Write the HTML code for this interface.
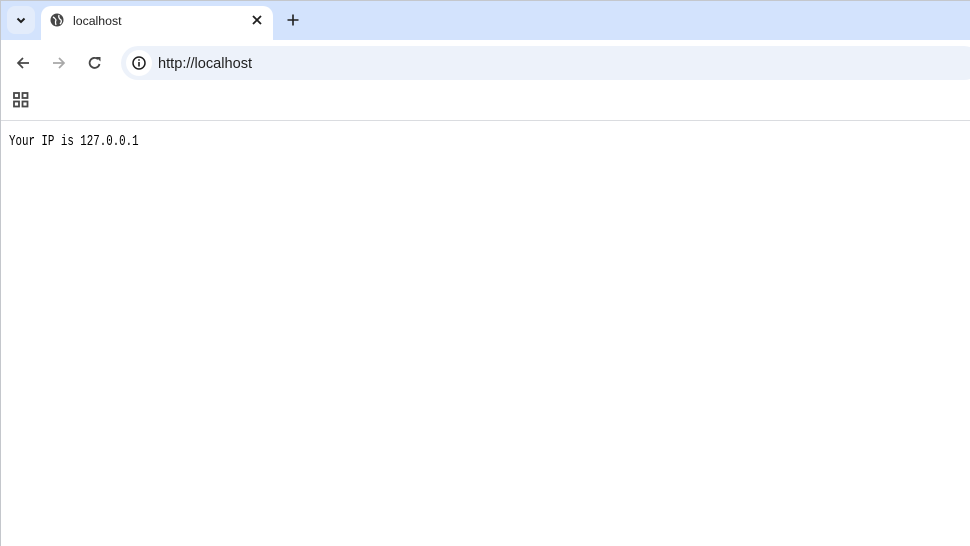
<!DOCTYPE html>
<html><head><meta charset="utf-8"><style>
*{margin:0;padding:0;box-sizing:border-box}
body{width:970px;height:546px;overflow:hidden;background:#fff;font-family:"Liberation Sans",sans-serif;position:relative}
.frame{position:absolute;left:0;top:0;width:970px;height:546px;border-left:1px solid #c4c7cc;border-top:1px solid #c4c7cc;pointer-events:none}
.strip{position:absolute;left:0;top:0;width:970px;height:40px;background:#d3e3fd}
.dd{position:absolute;left:7px;top:6px;width:28px;height:28px;border-radius:8px;background:#e3ecfb}
.tab{position:absolute;left:41px;top:6px;width:232px;height:36px;background:#fff;border-radius:10px 10px 0 0}
.tabtxt{position:absolute;left:73px;top:14px;font-size:12.3px;color:#1f1f1f}
.bar{position:absolute;left:0;top:40px;width:970px;height:81px;background:#fff;border-bottom:1px solid #dadce0}
.omni{position:absolute;left:121px;top:46px;width:860px;height:34px;border-radius:17px;background:#edf2fa}
.info{position:absolute;left:126px;top:50px;width:26px;height:26px;border-radius:13px;background:#fff}
.url{position:absolute;left:158px;top:56px;font-size:14.6px;color:#1f1f1f}
.content{position:absolute;left:9px;top:133px;font-family:"Liberation Mono",monospace;font-size:15px;color:#000;transform:scaleX(0.72);transform-origin:0 0;white-space:nowrap}
svg{position:absolute}
</style></head><body>
<div class="strip"></div>
<div class="dd"></div>
<svg style="left:14px;top:13px" width="14" height="14" viewBox="0 0 14 14"><path d="M3.5 5.5 L7 9 L10.5 5.5" fill="none" stroke="#1f1f1f" stroke-width="2"/></svg>
<div class="tab"></div>
<svg style="left:50px;top:13px" width="14" height="14" viewBox="0 0 14 14"><circle cx="7" cy="7" r="6.5" fill="#474747"/><path d="M3 4 Q5 5 6 7 Q5 9 6 12 M9 2 Q8 5 11 7 Q12 9 10 11" fill="none" stroke="#fff" stroke-width="1.3"/></svg>
<div class="tabtxt">localhost</div>
<svg style="left:251px;top:14px" width="12" height="12" viewBox="0 0 12 12"><path d="M2 2 L10 10 M10 2 L2 10" stroke="#1f1f1f" stroke-width="1.8"/></svg>
<svg style="left:286px;top:13px" width="14" height="14" viewBox="0 0 14 14"><path d="M7 1.5 V12.5 M1.5 7 H12.5" stroke="#1f1f1f" stroke-width="1.6"/></svg>
<div class="bar"></div>
<svg style="left:15px;top:55px" width="16" height="16" viewBox="0 0 16 16"><path d="M14 8 H3 M8 3 L3 8 L8 13" fill="none" stroke="#474747" stroke-width="1.7"/></svg>
<svg style="left:51px;top:55px" width="16" height="16" viewBox="0 0 16 16"><path d="M2 8 H13 M8 3 L13 8 L8 13" fill="none" stroke="#a8a8a8" stroke-width="1.7"/></svg>
<svg style="left:87px;top:55px" width="16" height="16" viewBox="0 0 16 16"><path d="M12.5 9 A5 5 0 1 1 11 4.2" fill="none" stroke="#474747" stroke-width="1.8"/><path d="M9 2 H13.5 V6.5 Z" fill="#474747"/></svg>
<div class="omni"></div>
<div class="info"></div>
<svg style="left:131px;top:55px" width="16" height="16" viewBox="0 0 16 16"><circle cx="8" cy="8" r="6" fill="none" stroke="#1f1f1f" stroke-width="1.5"/><path d="M8 7 V11.5" stroke="#1f1f1f" stroke-width="1.6"/><circle cx="8" cy="5" r="0.9" fill="#1f1f1f"/></svg>
<div class="url">http://localhost</div>
<svg style="left:12px;top:91px" width="18" height="18" viewBox="0 0 18 18"><g fill="none" stroke="#474747" stroke-width="1.8"><rect x="2" y="2" width="5" height="5"/><rect x="10.5" y="2" width="5" height="5"/><rect x="2" y="10.5" width="5" height="5"/><rect x="10.5" y="10.5" width="5" height="5"/></g></svg>
<div class="content">Your IP is 127.0.0.1</div>
<div class="frame"></div>
</body></html>
